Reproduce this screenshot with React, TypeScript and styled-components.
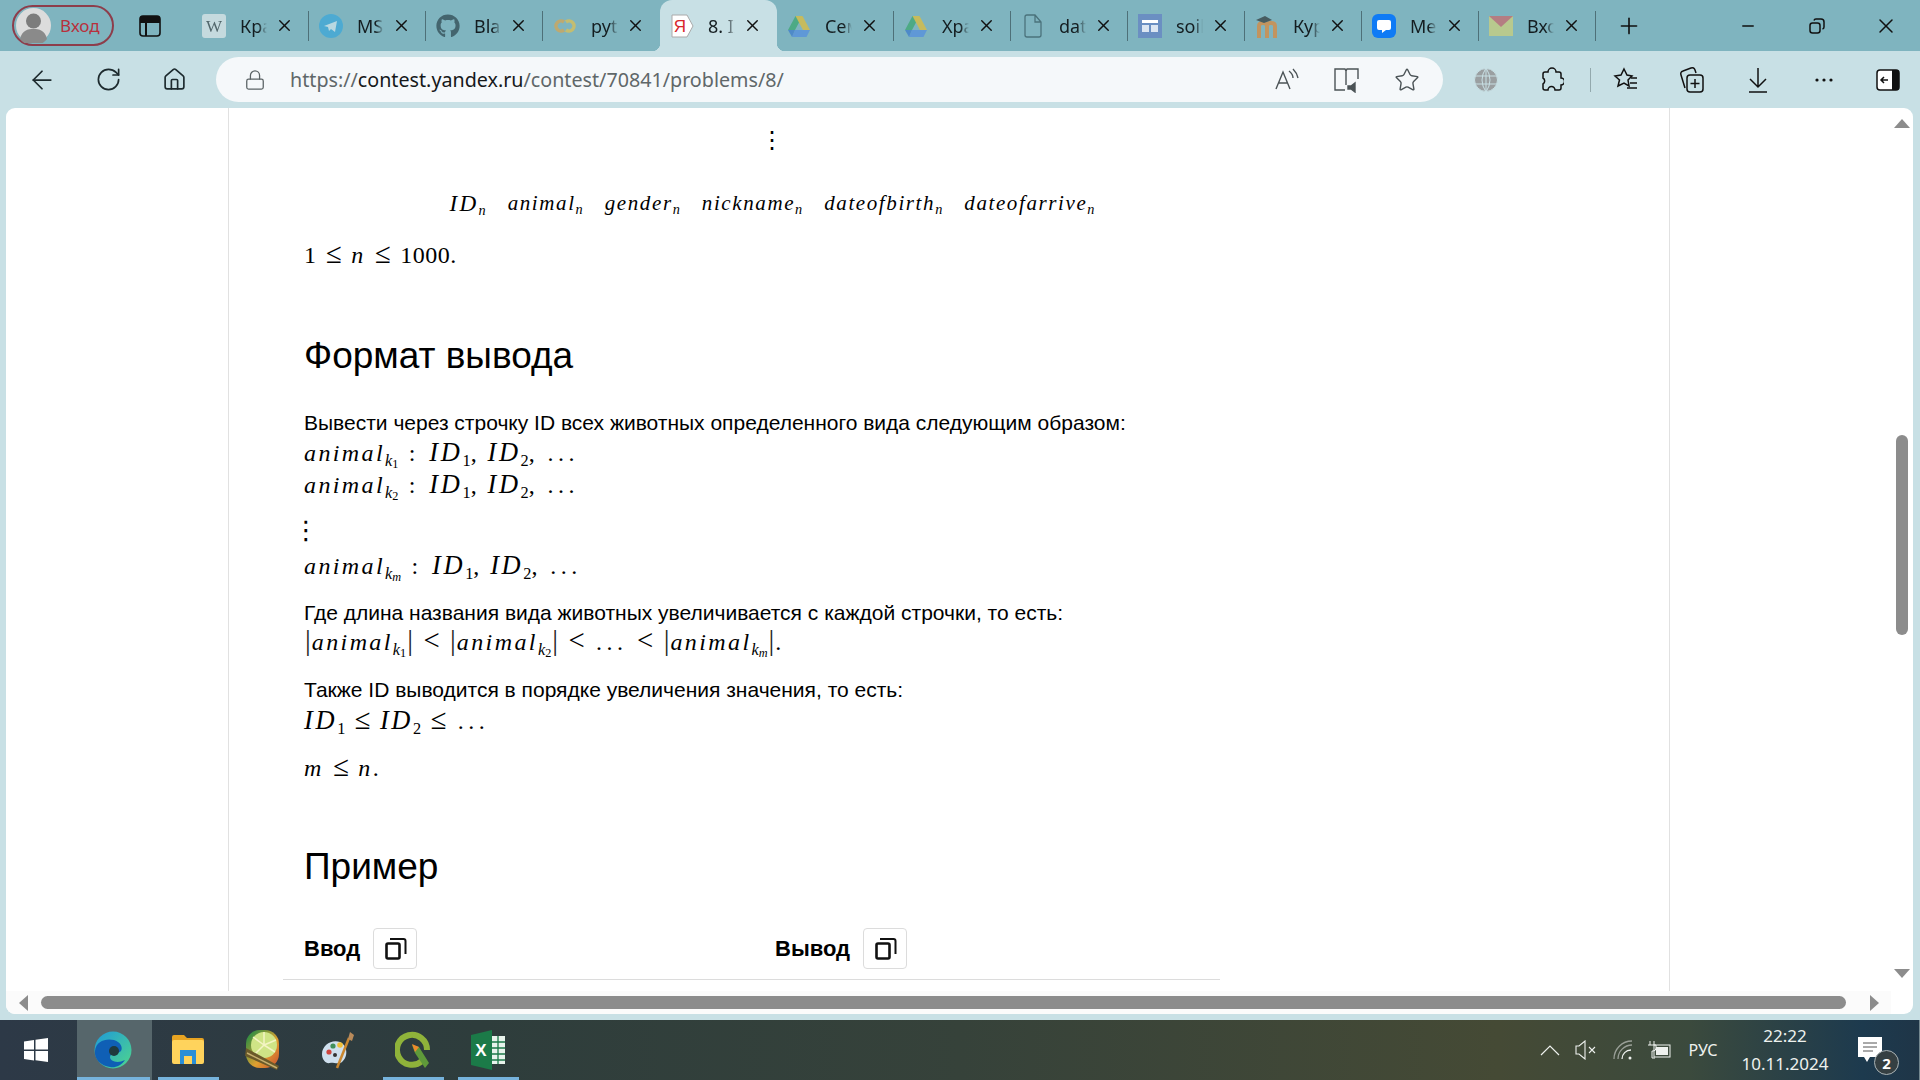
import React from "react";
import styled, { createGlobalStyle } from "styled-components";
import { ArrowLeft, Home, Lock, Minus, Plus, RotateCw, Star, X } from "lucide-react";
import { FaGithub } from "react-icons/fa";

const GlobalStyle = createGlobalStyle`
  html, body {
    margin: 0;
    padding: 0;
    overflow: hidden;
  }
  * {
    box-sizing: border-box;
  }
`;

const Screen = styled.div`
  width: 1920px;
  height: 1080px;
  display: flex;
  flex-direction: column;
  background: #c8e0e5;
  font-family: "Noto Sans", sans-serif;
  overflow: hidden;
`;

/* ---------- tab strip ---------- */

const TabStrip = styled.div`
  height: 51px;
  flex: none;
  display: flex;
  align-items: flex-start;
  background: #7fb4bf;
  padding-left: 12px;
`;

const Profile = styled.div`
  width: 102px;
  height: 41px;
  margin-top: 5px;
  flex: none;
  display: flex;
  align-items: center;
  gap: 9px;
  padding-left: 2px;
  border: 2px solid #8d3d4b;
  border-radius: 21px;
  color: #b8303c;
  font-size: 17px;
`;

const Avatar = styled.svg`
  width: 35px;
  height: 35px;
  flex: none;
`;

const WorkspaceButton = styled.div`
  width: 78px;
  height: 51px;
  flex: none;
  display: flex;
  align-items: center;
  justify-content: center;
  padding-right: 6px;
`;

const Tab = styled.div<{ $active?: boolean; $sep?: boolean }>`
  position: relative;
  width: 117px;
  height: 51px;
  flex: none;
  display: flex;
  align-items: center;
  padding-left: 10px;
  background: ${(p) => (p.$active ? "#c8e0e5" : "transparent")};
  border-radius: ${(p) => (p.$active ? "12px 12px 0 0" : "0")};
  &::after {
    content: "";
    display: ${(p) => (p.$sep ? "block" : "none")};
    position: absolute;
    top: 11px;
    right: 0;
    width: 1px;
    height: 30px;
    background: #4e7078;
  }
`;

/* the little flares at the foot of the selected tab */
const TabFlare = styled.span<{ $side: "left" | "right" }>`
  position: absolute;
  bottom: 0;
  ${(p) => p.$side}: -8px;
  width: 8px;
  height: 8px;
  background: radial-gradient(
    circle at ${(p) => (p.$side === "left" ? "0 0" : "100% 0")},
    transparent 8px,
    #c8e0e5 8.5px
  );
`;

const Favicon = styled.svg<{ $faded?: boolean }>`
  width: 24px;
  height: 24px;
  flex: none;
  opacity: ${(p) => (p.$faded ? 0.6 : 1)};
`;

const TabTitle = styled.span`
  width: 27px;
  margin-left: 14px;
  overflow: hidden;
  white-space: nowrap;
  font-size: 18px;
  color: #141d20;
  -webkit-mask-image: linear-gradient(90deg, #000 68%, transparent 100%);
  mask-image: linear-gradient(90deg, #000 68%, transparent 100%);
`;

const TabClose = styled.span`
  display: flex;
  margin-left: 8px;
  color: #111;
`;

const NewTab = styled.div`
  width: 66px;
  height: 51px;
  flex: none;
  display: flex;
  align-items: center;
  justify-content: center;
  color: #111;
`;

const WindowButtons = styled.div`
  margin-left: auto;
  display: flex;
  color: #111;
`;

const WindowButton = styled.div`
  width: 69px;
  height: 51px;
  display: flex;
  align-items: center;
  justify-content: center;
`;

/* ---------- toolbar ---------- */

const Toolbar = styled.div`
  height: 57px;
  flex: none;
  display: flex;
  align-items: center;
  padding: 0 0 0 9px;
  color: #1d2a2e;
`;

const ToolButton = styled.div<{ $narrow?: boolean }>`
  width: ${(p) => (p.$narrow ? "62px" : "66px")};
  height: 45px;
  flex: none;
  display: flex;
  align-items: center;
  justify-content: center;
`;

const AddressBar = styled.div`
  width: 1227px;
  height: 45px;
  margin: 0 10px 0 9px;
  flex: none;
  display: flex;
  align-items: center;
  padding: 0 6px 0 28px;
  background: #f5f8fa;
  border-radius: 23px;
`;

const Url = styled.div`
  margin-left: 24px;
  font-size: 19.7px;
  color: #5f6769;
  white-space: nowrap;
  flex: 1;
  b {
    font-weight: 400;
    color: #16191a;
  }
`;

const AddressAction = styled.div`
  width: 60px;
  display: flex;
  justify-content: center;
  color: #4b5356;
`;

const ToolDivider = styled.div`
  width: 1px;
  height: 24px;
  flex: none;
  margin: 0 2px 0 5px;
  background: #93a9ad;
`;

/* ---------- browser viewport ---------- */

const Frame = styled.div`
  flex: 1;
  min-height: 0;
  margin: 0 7px 6px 6px;
  display: grid;
  grid-template-columns: 1fr 22px;
  grid-template-rows: 1fr 23px;
  background: #fff;
  border-radius: 9px;
  overflow: hidden;
`;

const Viewport = styled.div`
  min-height: 0;
  overflow: hidden;
`;

const Sheet = styled.main`
  width: 1442px;
  height: 100%;
  margin-left: 222px;
  padding-left: 75px;
  border-left: 1px solid #e1e1e1;
  border-right: 1px solid #e1e1e1;
  overflow: hidden;
  color: #000;
  font-family: "Liberation Sans", Arial, sans-serif;
`;

const VerticalBar = styled.div`
  grid-row: 1 / 3;
  grid-column: 2;
  display: flex;
  flex-direction: column;
  align-items: center;
  padding: 11px 3px 0 3px;
`;

const ThumbV = styled.div`
  width: 12px;
  height: 200px;
  margin-top: 307px;
  border-radius: 6px;
  background: #8c8c8c;
`;

const Arrow = styled.div<{ $dir: "up" | "down" | "left" | "right" }>`
  width: 0;
  height: 0;
  flex: none;
  border-style: solid;
  border-color: transparent;
  ${(p) =>
    p.$dir === "up"
      ? "border-width: 0 8px 9px; border-bottom-color: #8c8c8c;"
      : p.$dir === "down"
        ? "border-width: 9px 8px 0; border-top-color: #8c8c8c; margin-top: 334px;"
        : p.$dir === "left"
          ? "border-width: 8px 9px 8px 0; border-right-color: #8c8c8c;"
          : "border-width: 8px 0 8px 9px; border-left-color: #8c8c8c;"}
`;

const HorizontalBar = styled.div`
  display: flex;
  align-items: center;
  padding: 0 0 0 13px;
  background: #fbfbfb;
`;

const ThumbH = styled.div`
  width: 1805px;
  height: 13px;
  margin-left: 13px;
  margin-right: 24px;
  border-radius: 7px;
  background: #8c8c8c;
`;

/* ---------- statement ---------- */

const Centered = styled.div<{ $top: number }>`
  width: 936px;
  margin-top: ${(p) => p.$top}px;
  text-align: center;
`;

const DotsGlyph = styled.div<{ $top: number; $size: number }>`
  margin: ${(p) => p.$top}px 0 0 -11px;
  font-family: "DejaVu Sans", sans-serif;
  font-size: ${(p) => p.$size}px;
  line-height: 30px;
  height: 30px;
`;

const BlockDots = styled(DotsGlyph)`
  width: 936px;
  height: 48px;
  margin-left: 0;
  line-height: 48px;
  text-align: center;
`;

const MathLine = styled.div<{ $top?: number }>`
  margin-top: ${(p) => p.$top ?? 0}px;
  height: 30px;
  font-family: "Liberation Serif", "Times New Roman", serif;
  font-size: 24px;
  line-height: 30px;
  letter-spacing: 2.4px;
  white-space: nowrap;
  i {
    font-style: italic;
  }
  sub {
    font-size: 0.68em;
    line-height: 0;
    letter-spacing: 0;
    vertical-align: -0.28em;
  }
  sub sub {
    font-size: 0.75em;
    vertical-align: -0.2em;
  }
`;

const DisplayRow = styled(MathLine)`
  display: inline-flex;
  gap: 22px;
  font-size: 21px;
  letter-spacing: 1.6px;
`;

/* capitals in the math font run wider than Liberation Serif's */
const Cap = styled.i`
  font-size: 1.1em;
  letter-spacing: 0.1em;
`;

const Op = styled.span`
  font-size: 1.2em;
  line-height: 0;
  letter-spacing: 0;
  margin: 0 1px;
`;

const Colon = styled.span`
  margin: 0 3px 0 2px;
`;

const Bar = styled.span`
  font-size: 1.2em;
  line-height: 0;
  letter-spacing: 0;
  font-weight: 400;
  color: #222;
  margin: 0 1px;
`;

const Dots = styled.span`
  letter-spacing: 4.5px;
  margin-left: 2px;
`;

const Digits = styled.span`
  letter-spacing: 0.5px;
`;

const Paragraph = styled.p<{ $top: number }>`
  margin: ${(p) => p.$top}px 0 0;
  height: 30px;
  font-size: 21px;
  line-height: 30px;
  white-space: nowrap;
`;

const Heading = styled.h2<{ $top: number }>`
  margin: ${(p) => p.$top}px 0 0;
  height: 44px;
  font-size: 37px;
  font-weight: 400;
  line-height: 44px;
`;

const ExampleHead = styled.div`
  display: grid;
  grid-template-columns: 471px 471px;
  margin-top: 39px;
`;

const ExampleLabel = styled.div`
  display: flex;
  align-items: center;
  gap: 13px;
  font-size: 22px;
  font-weight: 700;
`;

const CopyButton = styled.div`
  width: 44px;
  height: 41px;
  display: flex;
  align-items: center;
  justify-content: center;
  border: 1px solid #dcdcdc;
  border-radius: 4px;
`;

const Rule = styled.hr`
  width: 937px;
  height: 1px;
  margin: 10px 0 0 -21px;
  border: none;
  background: #dcdcdc;
`;

/* ---------- taskbar ---------- */

const Taskbar = styled.footer`
  height: 60px;
  flex: none;
  display: flex;
  align-items: stretch;
  color: #eef1ee;
  background: linear-gradient(90deg, #2d3947 0%, #2e3d3c 25%, #36423a 50%, #454a35 78%, #3b4a3d 88%, #1d3a4e 97%, #1f3547 100%);
`;

const StartButton = styled.div`
  width: 77px;
  display: flex;
  align-items: center;
  justify-content: center;
  padding-right: 5px;
`;

const TaskSlot = styled.div<{ $active?: boolean; $running?: boolean }>`
  position: relative;
  width: 75px;
  display: flex;
  align-items: center;
  justify-content: center;
  padding: 0 3px 1px 0;
  background: ${(p) => (p.$active ? "#56666b" : "transparent")};
  &::after {
    content: "";
    display: ${(p) => (p.$running ? "block" : "none")};
    position: absolute;
    left: ${(p) => (p.$active ? "0" : "6px")};
    right: ${(p) => (p.$active ? "2px" : "8px")};
    bottom: 0;
    height: 3px;
    background: #76b3dc;
  }
`;

const Tray = styled.div`
  margin-left: auto;
  display: flex;
  align-items: center;
`;

const TrayIcon = styled.div<{ $w: number }>`
  width: ${(p) => p.$w}px;
  display: flex;
  justify-content: center;
`;

const TrayLang = styled.div`
  width: 54px;
  text-align: center;
  font-size: 16px;
`;

const Clock = styled.div`
  width: 110px;
  text-align: center;
  font-size: 17px;
  line-height: 28px;
`;

const Notify = styled.div`
  position: relative;
  width: 80px;
  height: 60px;
  display: flex;
  align-items: center;
  justify-content: center;
  padding-right: 20px;
  border-right: 1px solid #73878f;
`;

const Badge = styled.span`
  position: absolute;
  left: 34px;
  top: 30px;
  width: 25px;
  height: 25px;
  display: flex;
  align-items: center;
  justify-content: center;
  border: 1px solid #aab3b5;
  border-radius: 50%;
  background: #353f42;
  font-size: 15px;
  font-weight: 700;
  color: #fff;
`;

/* ---------- drawings ---------- */

const Wiki = () => (
  <Favicon viewBox="0 0 24 24" $faded>
    <rect width="24" height="24" rx="3" fill="#f4f4f4" />
    <text x="12" y="18" fontSize="17" fontFamily="Liberation Serif" textAnchor="middle" fill="#333">W</text>
  </Favicon>
);

const Telegram = () => (
  <Favicon viewBox="0 0 24 24" $faded>
    <circle cx="12" cy="12" r="12" fill="#2ca5e0" />
    <path d="M5 12l13-5-2 11-4-3-2 2-1-4z" fill="#dff0f8" />
  </Favicon>
);

const Colab = () => (
  <Favicon viewBox="0 0 24 24" $faded>
    <path d="M11 8a5 5 0 1 0 0 8" fill="none" stroke="#e8a33d" strokeWidth="3.5" />
    <path d="M13 8a5 5 0 1 1 0 8" fill="none" stroke="#f3c33c" strokeWidth="3.5" />
  </Favicon>
);

const Yandex = () => (
  <Favicon viewBox="0 0 24 24">
    <path d="M2 1h15l6 11-6 11H2z" fill="#fff" stroke="#aaa" />
    <text x="10" y="18" fontSize="17" fontFamily="Liberation Sans" textAnchor="middle" fill="#d8262c">Я</text>
  </Favicon>
);

const Drive = () => (
  <Favicon viewBox="0 0 24 24" $faded>
    <path d="M8.5 2h7L8 16H1z" fill="#2da55f" />
    <path d="M15.500 2L23 16h-7L8.500 2z" fill="#f6c01d" />
    <path d="M5 23l3-7h15l-3.500 7z" fill="#4b87e8" />
    <path d="M1 16h7l-3 7z" fill="#2f6fd0" />
  </Favicon>
);

const Doc = () => (
  <Favicon viewBox="0 0 24 24" $faded>
    <path d="M4 3a2 2 0 0 1 2-2h8l6 7v13a2 2 0 0 1-2 2H6a2 2 0 0 1-2-2zM14 1v7h6" fill="none" stroke="#28474f" strokeWidth="1.3" />
  </Favicon>
);

const Soil = () => (
  <Favicon viewBox="0 0 24 24">
    <rect width="24" height="24" fill="#6b8fc2" />
    <rect x="4" y="6" width="16" height="3" fill="#fff" />
    <rect x="4" y="11" width="7" height="7" fill="#dce6f2" />
    <rect x="13" y="11" width="7" height="7" fill="#dce6f2" />
  </Favicon>
);

const Moodle = () => (
  <Favicon viewBox="0 0 24 24" $faded>
    <path d="M4 24V12q0-3 4-3t4 3v12M12 24V12q0-3 4-3t4 3v12" fill="none" stroke="#f08020" strokeWidth="4" />
    <path d="M1 6l9-4 7 4-8 3z" fill="#222" />
  </Favicon>
);

const Messages = () => (
  <Favicon viewBox="0 0 24 24">
    <rect width="24" height="24" rx="6" fill="#0f7bf5" />
    <path d="M7 6h10a2 2 0 0 1 2 2v6a2 2 0 0 1-2 2h-3l-4 3v-3H7a2 2 0 0 1-2-2V8a2 2 0 0 1 2-2z" fill="#fff" />
  </Favicon>
);

const MailIcon = () => (
  <Favicon viewBox="0 0 24 24" $faded>
    <rect y="2" width="24" height="20" fill="#dfd76f" />
    <path d="M0 2h24L12 13z" fill="#d85a5a" />
  </Favicon>
);

const GithubIcon = styled(FaGithub)`
  width: 24px;
  height: 24px;
  flex: none;
  color: #44656e;
`;

const tabs = [
  { title: "Кра", icon: <Wiki />, sep: true },
  { title: "MS", icon: <Telegram />, sep: true },
  { title: "Bla", icon: <GithubIcon />, sep: true },
  { title: "pyt", icon: <Colab />, sep: false },
  { title: "8. II", icon: <Yandex />, active: true },
  { title: "Сем", icon: <Drive />, sep: true },
  { title: "Хра", icon: <Drive />, sep: true },
  { title: "dat", icon: <Doc />, sep: true },
  { title: "soil", icon: <Soil />, sep: true },
  { title: "Кур", icon: <Moodle />, sep: true },
  { title: "Me", icon: <Messages />, sep: true },
  { title: "Вхо", icon: <MailIcon />, sep: true },
];

const CopyIcon = () => (
  <svg width="23" height="23" viewBox="0 0 23 23" fill="none" stroke="#111" strokeWidth="2.600">
    <rect x="2.500" y="6.500" width="13" height="15" rx="1.500" />
    <path d="M6 2h13.500a2 2 0 0 1 2 2v13" strokeWidth="2" />
  </svg>
);

const Sub = styled.sub``;

const AnimalK = ({ k }: { k: string }) => (
  <>
    <i>animal</i>
    <Sub>
      <i>k</i>
      <sub>{k === "m" ? <i>m</i> : k}</sub>
    </Sub>
  </>
);

const Ids = () => (
  <>
    <Cap>ID</Cap>
    <Sub>1</Sub>, <Cap>ID</Cap>
    <Sub>2</Sub>, <Dots>...</Dots>
  </>
);

const Term = ({ name }: { name: string }) => (
  <span>
    {name === "ID" ? <Cap>ID</Cap> : <i>{name}</i>}
    <Sub>
      <i>n</i>
    </Sub>
  </span>
);

export default function App() {
  return (
    <Screen>
      <GlobalStyle />
      <TabStrip>
        <Profile>
          <Avatar viewBox="0 0 35 35">
            <circle cx="17.500" cy="17.500" r="17.500" fill="#dcdcdc" />
            <circle cx="17.500" cy="13" r="7.500" fill="#7c7c7c" />
            <path d="M4 31c2-9 8-10 13.500-10S29 22 31 31a17 17 0 0 1-27 0z" fill="#8a8a8a" />
          </Avatar>
          Вход
        </Profile>
        <WorkspaceButton>
          <svg width="22" height="22" viewBox="0 0 22 22" fill="none" stroke="#111" strokeWidth="1.600">
            <rect x="1" y="1" width="20" height="20" rx="3" />
            <path d="M1 5h20v3H8v13H6V8H1z" fill="#111" stroke="none" />
            <path d="M1 4a3 3 0 0 1 3-3h14a3 3 0 0 1 3 3v4H1z" fill="#111" stroke="none" />
          </svg>
        </WorkspaceButton>
        {tabs.map((tab) => (
          <Tab key={tab.title + tab.sep} $active={tab.active} $sep={tab.sep}>
            {tab.active && <TabFlare $side="left" />}
            {tab.icon}
            <TabTitle>{tab.title}</TabTitle>
            <TabClose>
              <X size={19} strokeWidth={1.8} />
            </TabClose>
            {tab.active && <TabFlare $side="right" />}
          </Tab>
        ))}
        <NewTab>
          <Plus size={26} strokeWidth={1.500} />
        </NewTab>
        <WindowButtons>
          <WindowButton>
            <Minus size={18} strokeWidth={1.800} />
          </WindowButton>
          <WindowButton>
            <svg width="16" height="16" viewBox="0 0 16 16" fill="none" stroke="#111" strokeWidth="1.500">
              <rect x="1" y="5" width="10" height="10" rx="2.500" />
              <path d="M5 2.500A2 2 0 0 1 7 1h5a3 3 0 0 1 3 3v5a2 2 0 0 1-1.500 2" />
            </svg>
          </WindowButton>
          <WindowButton>
            <X size={24} strokeWidth={1.500} />
          </WindowButton>
        </WindowButtons>
      </TabStrip>

      <Toolbar>
        <ToolButton>
          <ArrowLeft size={30} strokeWidth={1.400} />
        </ToolButton>
        <ToolButton>
          <RotateCw size={27} strokeWidth={1.500} />
        </ToolButton>
        <ToolButton>
          <Home size={25} strokeWidth={1.600} />
        </ToolButton>
        <AddressBar>
          <Lock size={22} strokeWidth={1.400} color="#5b6365" />
          <Url>
            https://<b>contest.yandex.ru</b>/contest/70841/problems/8/
          </Url>
          <AddressAction>
            <svg width="26" height="24" viewBox="0 0 26 24" fill="none" stroke="#4b5356" strokeWidth="1.400">
              <path d="M2 21L9 4l7 17M5 15h8" />
              <path d="M15 3q4 3 4 7M19 1q4 4 5 9" />
            </svg>
          </AddressAction>
          <AddressAction>
            <svg width="28" height="26" viewBox="0 0 28 26" fill="none" stroke="#4b5356" strokeWidth="1.400">
              <path d="M12 23H2V2h10l1 2 1-2h11v10M13 4v14" />
              <path d="M15 19h3l4-3v9l-4-3h-3z" fill="#4b5356" />
            </svg>
          </AddressAction>
          <AddressAction>
            <Star size={26} strokeWidth={1.300} />
          </AddressAction>
        </AddressBar>
        <ToolButton>
          <svg width="24" height="24" viewBox="0 0 24 24" fill="#9a9fa1" stroke="#c8e0e5" strokeWidth="1">
            <circle cx="12" cy="12" r="11.500" />
            <path d="M0 8h24M0 16h24M12 0v24M12 0Q4 12 12 24M12 0q8 12 0 24" fill="none" />
          </svg>
        </ToolButton>
        <ToolButton>
          <svg width="24" height="26" viewBox="0 0 24 26" fill="none" stroke="#111" strokeWidth="1.500">
            <path d="M8 5a4 4 0 0 1 8 0h3a2 2 0 0 1 2 2v4a3.500 3.500 0 0 1 0 7v3a2 2 0 0 1-2 2h-4a3.500 3.500 0 0 0-7 0H5a2 2 0 0 1-2-2v-4a3.500 3.500 0 0 0 0-6V7a2 2 0 0 1 2-2z" />
          </svg>
        </ToolButton>
        <ToolDivider />
        <ToolButton>
          <svg width="26" height="26" viewBox="0 0 26 26" fill="none" stroke="#111" strokeWidth="1.500">
            <path d="M11 2l3 6 5 1-4 4 1 6-5-3-6 3 1.500-6L2 9l6-1z" />
            <path d="M18 11h6M17 16h7M14 21h10" />
          </svg>
        </ToolButton>
        <ToolButton>
          <svg width="26" height="28" viewBox="0 0 26 28" fill="none" stroke="#111" strokeWidth="1.500">
            <path d="M6 22L2 9q-1-3 2-4l8-3q3-1 4 2l1 3" />
            <rect x="8" y="9" width="16" height="17" rx="3" />
            <path d="M16 13v9M11.500 17.500h9" />
          </svg>
        </ToolButton>
        <ToolButton>
          <svg width="24" height="28" viewBox="0 0 24 28" fill="none" stroke="#111" strokeWidth="1.500">
            <path d="M12 2v19M4 13l8 8 8-8M3 26h18" />
          </svg>
        </ToolButton>
        <ToolButton>
          <svg width="20" height="6" viewBox="0 0 20 6" fill="#111">
            <circle cx="3" cy="3" r="1.600" />
            <circle cx="10" cy="3" r="1.600" />
            <circle cx="17" cy="3" r="1.600" />
          </svg>
        </ToolButton>
        <ToolButton $narrow>
          <svg width="24" height="22" viewBox="0 0 24 22">
            <rect x="1" y="1" width="22" height="20" rx="3" fill="#fff" stroke="#111" strokeWidth="1.500" />
            <path d="M16 1h5a2 2 0 0 1 2 2v16a2 2 0 0 1-2 2h-5z" fill="#111" />
            <path d="M12 11H5M8 8l-3 3 3 3" fill="none" stroke="#111" strokeWidth="1.500" />
          </svg>
        </ToolButton>
      </Toolbar>

      <Frame>
        <Viewport>
          <Sheet>
            <BlockDots $top={8} $size={24}>⋮</BlockDots>
            <Centered $top={24}>
              <DisplayRow>
                <Term name="ID" />
                <Term name="animal" />
                <Term name="gender" />
                <Term name="nickname" />
                <Term name="dateofbirth" />
                <Term name="dateofarrive" />
              </DisplayRow>
            </Centered>
            <MathLine $top={22}>
              <Digits>1</Digits> <Op>≤</Op> <i>n</i> <Op>≤</Op> <Digits>1000.</Digits>
            </MathLine>
            <Heading $top={64}>Формат вывода</Heading>
            <Paragraph $top={30}>Вывести через строчку ID всех животных определенного вида следующим образом:</Paragraph>
            <MathLine $top={-1}>
              <AnimalK k="1" /> <Colon>:</Colon> <Ids />
            </MathLine>
            <MathLine $top={2}>
              <AnimalK k="2" /> <Colon>:</Colon> <Ids />
            </MathLine>
            <DotsGlyph $top={16} $size={26}>⋮</DotsGlyph>
            <MathLine $top={5}>
              <AnimalK k="m" /> <Colon>:</Colon> <Ids />
            </MathLine>
            <Paragraph $top={18}>Где длина названия вида животных увеличивается с каждой строчки, то есть:</Paragraph>
            <MathLine $top={-1}>
              <Bar>|</Bar>
              <AnimalK k="1" />
              <Bar>|</Bar> <Op>&lt;</Op> <Bar>|</Bar>
              <AnimalK k="2" />
              <Bar>|</Bar> <Op>&lt;</Op> <Dots>...</Dots> <Op>&lt;</Op> <Bar>|</Bar>
              <AnimalK k="m" />
              <Bar>|</Bar>.
            </MathLine>
            <Paragraph $top={18}>Также ID выводится в порядке увеличения значения, то есть:</Paragraph>
            <MathLine>
              <Cap>ID</Cap>
              <Sub>1</Sub> <Op>≤</Op> <Cap>ID</Cap>
              <Sub>2</Sub> <Op>≤</Op> <Dots>...</Dots>
            </MathLine>
            <MathLine $top={18}>
              <i>m</i> <Op>≤</Op> <i>n</i>.
            </MathLine>
            <Heading $top={62}>Пример</Heading>
            <ExampleHead>
              <ExampleLabel>
                Ввод
                <CopyButton>
                  <CopyIcon />
                </CopyButton>
              </ExampleLabel>
              <ExampleLabel>
                Вывод
                <CopyButton>
                  <CopyIcon />
                </CopyButton>
              </ExampleLabel>
            </ExampleHead>
            <Rule />
          </Sheet>
        </Viewport>
        <VerticalBar>
          <Arrow $dir="up" />
          <ThumbV />
          <Arrow $dir="down" />
        </VerticalBar>
        <HorizontalBar>
          <Arrow $dir="left" />
          <ThumbH />
          <Arrow $dir="right" />
        </HorizontalBar>
      </Frame>

      <Taskbar>
        <StartButton>
          <svg width="24" height="24" viewBox="0 0 24 24" fill="#fff">
            <path d="M0 3.500l10-1.500v9.500H0zM11.500 1.800L24 0v11.500H11.500zM0 13h10v9.500L0 21zM11.500 13H24v11l-12.500-1.800z" />
          </svg>
        </StartButton>
        <TaskSlot $active $running>
          <svg width="38" height="38" viewBox="0 0 38 38">
            <defs>
              <linearGradient id="edgeTop" x1="0" y1="0" x2="1" y2="1">
                <stop offset="0" stopColor="#1f9ad8" />
                <stop offset="1" stopColor="#4fd68c" />
              </linearGradient>
            </defs>
            <circle cx="19" cy="19" r="18.500" fill="url(#edgeTop)" />
            <path d="M1 20C2 10 12 7 20 9c7 2 9 8 7 11-3 3-11 2-11 6 0 4 7 7 15 3-4 6-10 8-15 7C7 35 0 28 1 20z" fill="#0f5fb5" />
            <circle cx="20" cy="20" r="5" fill="#1f3a3d" />
          </svg>
        </TaskSlot>
        <TaskSlot $running>
          <svg width="34" height="32" viewBox="0 0 34 32">
            <path d="M1 3a2 2 0 0 1 2-2h10l3 3h15a2 2 0 0 1 2 2v6H1z" fill="#e8a422" />
            <rect x="1" y="6" width="32" height="24" rx="2" fill="#ffd35c" />
            <path d="M9 16h16v14h-4v-8h-8v8H9z" fill="#2a8fd8" />
          </svg>
        </TaskSlot>
        <TaskSlot>
          <svg width="36" height="42" viewBox="0 0 36 42">
            <defs>
              <linearGradient id="limeRim" x1="0" y1="0" x2="1" y2="1">
                <stop offset="0" stopColor="#0b8a45" />
                <stop offset="0.6" stopColor="#e0a030" />
                <stop offset="1" stopColor="#c84a30" />
              </linearGradient>
            </defs>
            <rect x="1" y="1" width="33" height="38" rx="14" fill="url(#limeRim)" />
            <circle cx="19" cy="16" r="13" fill="#cfe486" />
            <path d="M19 16V3M19 16l12-5M19 16L8 8M19 16l-9 9M19 16l11 7" stroke="#f4f4c4" strokeWidth="1.500" />
            <path d="M1 19l33 18-2 4L0 27z" fill="#6b5a2a" />
            <path d="M2 24l30 15" stroke="#c8b070" strokeWidth="1.500" />
          </svg>
        </TaskSlot>
        <TaskSlot>
          <svg width="36" height="40" viewBox="0 0 36 40">
            <path d="M2 24C2 15 12 9 20 12c7 3 9 14 2 20-4 3-9 0-12 1-4 1-8-3-8-9z" fill="#cfe0ee" />
            <circle cx="9" cy="22" r="2.600" fill="#d0453e" />
            <circle cx="13" cy="16" r="2.600" fill="#3f8f5a" />
            <circle cx="20" cy="15" r="2.800" fill="#efc03a" />
            <circle cx="15" cy="25" r="2" fill="#333" />
            <path d="M17 38L29 8" stroke="#c9862f" strokeWidth="2.500" />
            <path d="M28 9l2-7 4 3-2 6z" fill="#b98a5a" />
          </svg>
        </TaskSlot>
        <TaskSlot $running>
          <svg width="36" height="40" viewBox="0 0 36 40">
            <path d="M27 31a15 15 0 1 1 5-11" fill="none" stroke="#8fb33a" strokeWidth="6" />
            <path d="M17 15l7 2 10 16-4 5-10-15z" fill="#5f9a3a" />
            <path d="M17 14l7 3-4 5z" fill="#ee8a2c" />
          </svg>
        </TaskSlot>
        <TaskSlot $running>
          <svg width="34" height="40" viewBox="0 0 34 40">
            <path d="M0 5l21-5v40L0 35z" fill="#1b7a48" />
            <rect x="21" y="6" width="13" height="28" fill="#e8f3ec" />
            <path d="M21 12h13M21 18h13M21 24h13M21 30h13M27 6v28" stroke="#1b7a48" strokeWidth="1.300" />
            <text x="10" y="26" fontSize="17" fontWeight="700" fontFamily="Liberation Sans" textAnchor="middle" fill="#fff">X</text>
          </svg>
        </TaskSlot>
        <Tray>
          <TrayIcon $w={36}>
            <svg width="20" height="12" viewBox="0 0 20 12" fill="none" stroke="#eef1ee" strokeWidth="1.200">
              <path d="M1 11l9-9 9 9" />
            </svg>
          </TrayIcon>
          <TrayIcon $w={36}>
            <svg width="22" height="20" viewBox="0 0 22 20" fill="none" stroke="#eef1ee" strokeWidth="1.100">
              <path d="M1 6h3l6-5v18l-6-5H1zM14 7l6 6M20 7l-6 6" />
            </svg>
          </TrayIcon>
          <TrayIcon $w={38}>
            <svg width="20" height="20" viewBox="0 0 20 20" fill="none" stroke="#9aa098" strokeWidth="1.300">
              <path d="M1 19A18 18 0 0 1 19 1M5 19A14 14 0 0 1 19 5" />
              <path d="M9 19a9 9 0 0 1 9-9" stroke="#eef1ee" />
              <circle cx="17" cy="18" r="1.500" fill="#eef1ee" stroke="none" />
            </svg>
          </TrayIcon>
          <TrayIcon $w={34}>
            <svg width="24" height="18" viewBox="0 0 24 18" fill="none" stroke="#eef1ee" strokeWidth="1">
              <path d="M3 0v4M7 0v4M1 4h8v3a3 3 0 0 1-3 3h-1v7h3" />
              <rect x="7" y="4" width="16" height="12" />
              <rect x="9" y="6" width="12" height="8" fill="#eef1ee" stroke="none" />
            </svg>
          </TrayIcon>
          <TrayLang>РУС</TrayLang>
          <Clock>
            22:22
            <br />
            10.11.2024
          </Clock>
          <Notify>
            <svg width="24" height="26" viewBox="0 0 24 26">
              <path d="M0 0h24v20H12l-3 5-3-5H0z" fill="#fff" />
              <path d="M5 6h14M5 10h14M5 14h10" stroke="#555" strokeWidth="1" />
            </svg>
            <Badge>2</Badge>
          </Notify>
        </Tray>
      </Taskbar>
    </Screen>
  );
}
